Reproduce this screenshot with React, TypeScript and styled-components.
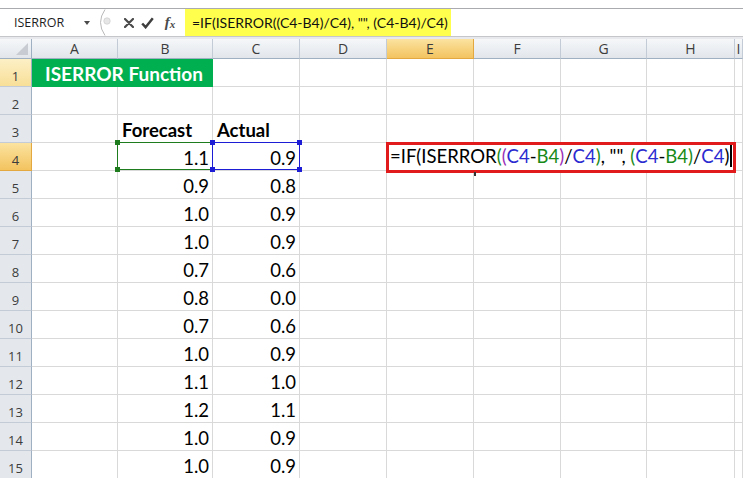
import React from 'react';
import styled, { createGlobalStyle, css } from 'styled-components';

const GlobalStyle = createGlobalStyle`
  html, body {
    margin: 0;
    background: #ffffff;
    overflow: hidden;
  }
  body {
    font-family: 'Lato', 'Liberation Sans', sans-serif;
  }
`;

const colors = {
  grid: '#d9d9d9',
  headerBg: 'linear-gradient(#f5f7f9, #e2e6eb)',
  headerLine: '#c3cbd6',
  headerEdge: '#9fb0c3',
  headerText: '#3c3c3c',
  activeHeader: 'linear-gradient(#fbe3a0, #f3c35f)',
  activeEdge: '#e3a940',
  softHeader: 'linear-gradient(#fdf0c6, #f8df98)',
  title: '#00b050',
  refBlue: '#2b2bd0',
  refGreen: '#188a18',
  refPurple: '#9a2fb8',
  frameGreen: '#1e7b1e',
  frameBlue: '#1d1dd6',
  note: '#e11b1b',
  formulaYellow: '#ffff4d',
};

const columns = ['A', 'B', 'C', 'D', 'E', 'F', 'G', 'H', 'I'];

const values: [string, string][] = [
  ['0.9', '0.8'],
  ['1.0', '0.9'],
  ['1.0', '0.9'],
  ['0.7', '0.6'],
  ['0.8', '0.0'],
  ['0.7', '0.6'],
  ['1.0', '0.9'],
  ['1.1', '1.0'],
  ['1.2', '1.1'],
  ['1.0', '0.9'],
  ['1.0', '0.9'],
];

type Token = [string, string];

const formulaTokens: Token[] = [
  ['=IF(ISERROR', '#000'],
  ['(', colors.refGreen],
  ['(', colors.refPurple],
  ['C4', colors.refBlue],
  ['-', '#000'],
  ['B4', colors.refGreen],
  [')', colors.refPurple],
  ['/', '#000'],
  ['C4', colors.refBlue],
  [')', colors.refGreen],
  [', "", ', '#000'],
  ['(', colors.refGreen],
  ['C4', colors.refBlue],
  ['-', '#000'],
  ['B4', colors.refGreen],
  [')', colors.refGreen],
  ['/', '#000'],
  ['C4', colors.refBlue],
  [')', '#000'],
];

const formulaText = formulaTokens.map(([t]) => t).join('');

export default function App() {
  return (
    <>
      <GlobalStyle />
      <Window>
        <FormulaBar>
          <NameBox>
            <NameText>ISERROR</NameText>
            <DropArrow />
          </NameBox>
          <BarGrip>
            <svg width="16" height="27" viewBox="0 0 16 27">
              <path d="M8 0.5 Q-1 13.5 8 26.5" fill="none" stroke="#b9b9b9" strokeWidth="1" />
              <circle cx="10" cy="12" r="3.2" fill="#e6e6e6" stroke="#cfcfcf" strokeWidth="0.8" />
            </svg>
          </BarGrip>
          <BarIcon>
            <svg width="10" height="10" viewBox="0 0 10 10">
              <path d="M1 1 L9 9 M9 1 L1 9" stroke="#4a4a4a" strokeWidth="2.2" strokeLinecap="round" />
            </svg>
          </BarIcon>
          <BarIcon>
            <svg width="13" height="12" viewBox="0 0 13 12">
              <path d="M1.2 6.5 L4.6 10.2 L11.8 1.2" fill="none" stroke="#3f3f3f" strokeWidth="2.5" />
            </svg>
          </BarIcon>
          <FxLabel>
            f<small>x</small>
          </FxLabel>
          <FormulaInput>{formulaText}</FormulaInput>
        </FormulaBar>
        <Band />
        <Sheet>
          <CornerCell>
            <CornerTriangle />
          </CornerCell>
          {columns.map(c => (
            <ColHeader key={c} $active={c === 'E'}>{c}</ColHeader>
          ))}

          <RowHeader $state="soft">1</RowHeader>
          <TitleCell $span={2}>ISERROR Function</TitleCell>
          {columns.slice(2).map(c => <Cell key={`1${c}`} />)}

          <RowHeader>2</RowHeader>
          {columns.map(c => <Cell key={`2${c}`} />)}

          <RowHeader>3</RowHeader>
          <Cell />
          <Cell $bold>Forecast</Cell>
          <Cell $bold>Actual</Cell>
          {columns.slice(3).map(c => <Cell key={`3${c}`} />)}

          <RowHeader $state="active">4</RowHeader>
          <Cell />
          <Cell $align="right">
            1.1
            <RangeFrame $color={colors.frameGreen}>
              <Handle $color={colors.frameGreen} $v="top" $h="left" />
              <Handle $color={colors.frameGreen} $v="top" $h="right" />
              <Handle $color={colors.frameGreen} $v="bottom" $h="left" />
              <Handle $color={colors.frameGreen} $v="bottom" $h="right" />
            </RangeFrame>
          </Cell>
          <Cell $align="right">
            0.9
            <RangeFrame $color={colors.frameBlue}>
              <Handle $color={colors.frameBlue} $v="top" $h="left" />
              <Handle $color={colors.frameBlue} $v="top" $h="right" />
              <Handle $color={colors.frameBlue} $v="bottom" $h="left" />
              <Handle $color={colors.frameBlue} $v="bottom" $h="right" />
            </RangeFrame>
          </Cell>
          <Cell />
          <FormulaCell $span={4}>
            <NoteBox>
              {formulaTokens.map(([t, c], i) => (
                <Tok key={i} $c={c}>{t}</Tok>
              ))}
              <Caret />
            </NoteBox>
            <MouseTick />
          </FormulaCell>
          <Cell />

          {values.map(([forecast, actual], i) => (
            <React.Fragment key={i}>
              <RowHeader>{i + 5}</RowHeader>
              <Cell />
              <Cell $align="right">{forecast}</Cell>
              <Cell $align="right">{actual}</Cell>
              {columns.slice(3).map(c => <Cell key={`${i}${c}`} />)}
            </React.Fragment>
          ))}
        </Sheet>
      </Window>
    </>
  );
}

const Window = styled.div`
  width: 743px;
  height: 478px;
  overflow: hidden;
  padding-top: 8px;
  box-sizing: border-box;
  background: #fff;
`;

const FormulaBar = styled.div`
  display: flex;
  align-items: stretch;
  height: 29px;
  box-sizing: border-box;
  border-top: 1px solid #a9abae;
  border-bottom: 1px solid #c4c6c9;
  background: #fff;
`;

const NameBox = styled.div`
  display: flex;
  align-items: center;
  width: 97px;
  padding-left: 14px;
  box-sizing: border-box;
`;

const NameText = styled.span`
  font-family: 'Open Sans', 'Liberation Sans', sans-serif;
  font-size: 12.5px;
  color: #1e1e1e;
  flex: 1;
`;

const DropArrow = styled.span`
  width: 0;
  height: 0;
  margin-right: 7px;
  border-left: 3.5px solid transparent;
  border-right: 3.5px solid transparent;
  border-top: 4px solid #4a4a4a;
`;

const BarGrip = styled.div`
  display: flex;
  align-items: center;
  width: 22px;
`;

const BarIcon = styled.div`
  display: flex;
  align-items: center;
  justify-content: center;
  width: 19px;
`;

const FxLabel = styled.div`
  display: flex;
  align-items: center;
  justify-content: center;
  width: 26px;
  margin-right: 2px;
  font-family: 'Liberation Serif', serif;
  font-style: italic;
  font-weight: bold;
  font-size: 15px;
  color: #4a4a4a;

  small {
    font-size: 11px;
    margin-top: 3px;
  }
`;

const FormulaInput = styled.div`
  display: flex;
  align-items: center;
  width: 266px;
  padding-left: 7px;
  box-sizing: border-box;
  background: ${colors.formulaYellow};
  font-size: 14px;
  color: #111;
  white-space: pre;
`;

const Band = styled.div`
  height: 2px;
  background: #e7e9ec;
`;

const Sheet = styled.div`
  display: grid;
  grid-template-columns: 32px 86px 95px 87px 87px 87px 87px 86px 88px 1fr;
  grid-template-rows: 20px;
  grid-auto-rows: 28px;
`;

const headerBase = css`
  display: flex;
  justify-content: center;
  box-sizing: border-box;
  font-family: 'Open Sans', 'Liberation Sans', sans-serif;
  font-size: 13px;
  color: ${colors.headerText};
`;

const CornerCell = styled.div`
  position: relative;
  background: ${colors.headerBg};
  border-right: 1px solid ${colors.headerEdge};
  border-bottom: 1px solid ${colors.headerEdge};
  box-sizing: border-box;
`;

const CornerTriangle = styled.div`
  position: absolute;
  right: 3px;
  bottom: 3px;
  width: 0;
  height: 0;
  border-left: 12px solid transparent;
  border-bottom: 12px solid #c8ccd2;
`;

const ColHeader = styled.div<{ $active?: boolean }>`
  ${headerBase};
  align-items: center;
  font-size: 14px;
  background: ${({ $active }) => ($active ? colors.activeHeader : colors.headerBg)};
  border-right: 1px solid ${({ $active }) => ($active ? colors.activeEdge : colors.headerLine)};
  border-bottom: 1px solid ${({ $active }) => ($active ? colors.activeEdge : colors.headerEdge)};
`;

const RowHeader = styled.div<{ $state?: 'active' | 'soft' }>`
  ${headerBase};
  align-items: center;
  padding-top: 6px;
  background: ${({ $state }) =>
    $state === 'active' ? colors.activeHeader : $state === 'soft' ? colors.softHeader : '#e4e8ed'};
  border-right: 1px solid ${({ $state }) => ($state === 'active' ? colors.activeEdge : colors.headerEdge)};
  border-bottom: 1px solid ${({ $state }) => ($state === 'active' ? colors.activeEdge : colors.headerLine)};
`;

interface CellProps {
  $align?: 'left' | 'right'
  $bold?: boolean
  $span?: number
}

const Cell = styled.div<CellProps>`
  position: relative;
  display: flex;
  align-items: flex-end;
  justify-content: ${({ $align }) => ($align === 'right' ? 'flex-end' : 'flex-start')};
  grid-column: ${({ $span }) => ($span ? `span ${$span}` : 'auto')};
  padding: 0 3px 1px 4px;
  box-sizing: border-box;
  border-right: 1px solid ${colors.grid};
  border-bottom: 1px solid ${colors.grid};
  font-size: 18.5px;
  line-height: 22px;
  font-weight: ${({ $bold }) => ($bold ? 700 : 400)};
  color: #000;
  white-space: nowrap;
`;

const TitleCell = styled(Cell)`
  background: ${colors.title};
  border-color: ${colors.title};
  color: #fff;
  font-weight: 700;
  font-size: 19px;
  padding-left: 13px;
`;

const RangeFrame = styled.div<{ $color: string }>`
  position: absolute;
  top: -1px;
  left: -1px;
  right: -1px;
  bottom: 0;
  border: 1px solid ${({ $color }) => $color};
  pointer-events: none;
  z-index: 1;
`;

const Handle = styled.span<{ $color: string; $v: 'top' | 'bottom'; $h: 'left' | 'right' }>`
  position: absolute;
  width: 5px;
  height: 5px;
  background: ${({ $color }) => $color};
  ${({ $v }) => ($v === 'top' ? 'top: -3px;' : 'bottom: -3px;')}
  ${({ $h }) => ($h === 'left' ? 'left: -3px;' : 'right: -3px;')}
`;

const FormulaCell = styled(Cell)`
  border-right-color: transparent;
  border-bottom-color: transparent;
`;

const NoteBox = styled.div`
  position: absolute;
  top: -1px;
  left: -1px;
  right: -2px;
  bottom: -3px;
  z-index: 2;
  display: flex;
  align-items: flex-end;
  padding: 0 0 3px 1px;
  border: 3px solid ${colors.note};
  background: #fff;
  font-size: 18.5px;
  line-height: 22px;
  white-space: pre;
  overflow: hidden;
`;

const Tok = styled.span<{ $c: string }>`
  color: ${({ $c }) => $c};
`;

const Caret = styled.span`
  display: inline-block;
  flex-shrink: 0;
  width: 1.5px;
  height: 22px;
  margin-left: 1px;
  background: #000;
`;

const MouseTick = styled.span`
  position: absolute;
  left: 87px;
  bottom: -6px;
  width: 2px;
  height: 4px;
  background: #333;
  z-index: 3;
`;
